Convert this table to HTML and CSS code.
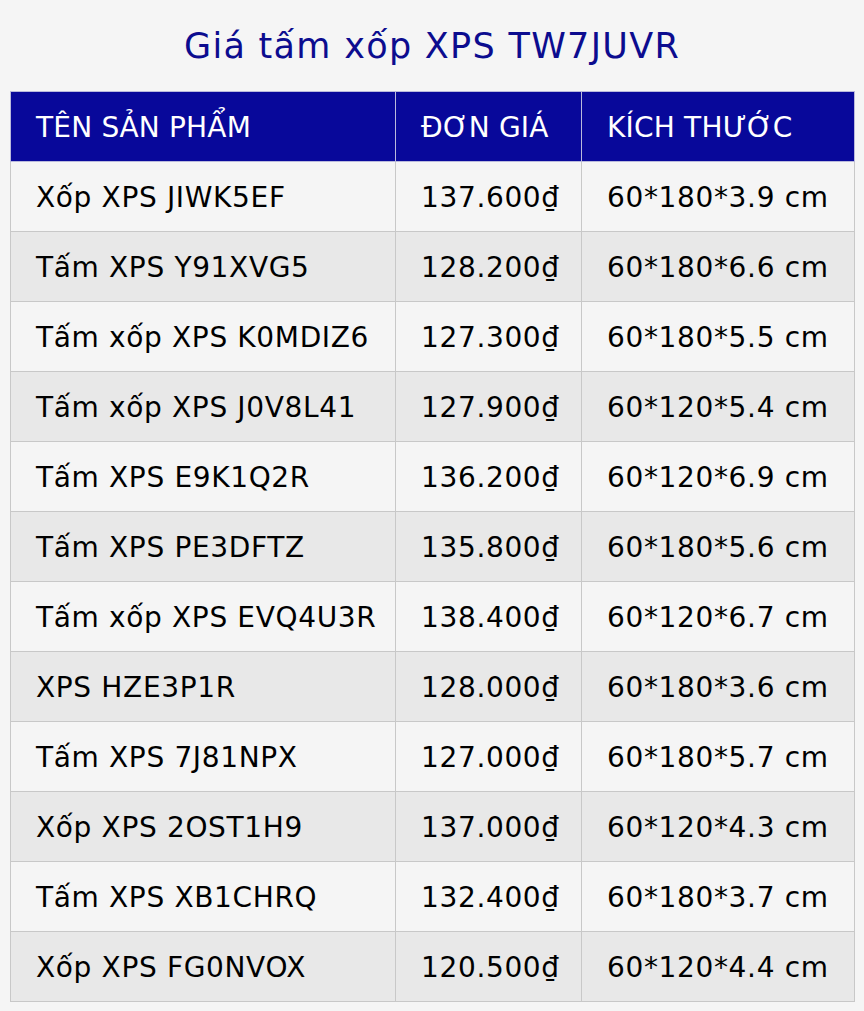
FILE: index.html
```html
<!DOCTYPE html>
<html lang="vi">
<head>
<meta charset="utf-8">
<link rel="stylesheet" href="styles.css">
</head>
<body>
<h1 class="title">Giá tấm xốp XPS TW7JUVR</h1>
<table class="price-table">
  <thead>
    <tr><th class="c-name">TÊN SẢN PHẨM</th><th class="c-price">ĐƠN GIÁ</th><th class="c-size">KÍCH THƯỚC</th></tr>
  </thead>
  <tbody>
    <tr><td>Xốp XPS JIWK5EF</td><td>137.600₫</td><td>60*180*3.9 cm</td></tr>
    <tr><td>Tấm XPS Y91XVG5</td><td>128.200₫</td><td>60*180*6.6 cm</td></tr>
    <tr><td>Tấm xốp XPS K0MDIZ6</td><td>127.300₫</td><td>60*180*5.5 cm</td></tr>
    <tr><td>Tấm xốp XPS J0V8L41</td><td>127.900₫</td><td>60*120*5.4 cm</td></tr>
    <tr><td>Tấm XPS E9K1Q2R</td><td>136.200₫</td><td>60*120*6.9 cm</td></tr>
    <tr><td>Tấm XPS PE3DFTZ</td><td>135.800₫</td><td>60*180*5.6 cm</td></tr>
    <tr><td>Tấm xốp XPS EVQ4U3R</td><td>138.400₫</td><td>60*120*6.7 cm</td></tr>
    <tr><td>XPS HZE3P1R</td><td>128.000₫</td><td>60*180*3.6 cm</td></tr>
    <tr><td>Tấm XPS 7J81NPX</td><td>127.000₫</td><td>60*180*5.7 cm</td></tr>
    <tr><td>Xốp XPS 2OST1H9</td><td>137.000₫</td><td>60*120*4.3 cm</td></tr>
    <tr><td>Tấm XPS XB1CHRQ</td><td>132.400₫</td><td>60*180*3.7 cm</td></tr>
    <tr><td>Xốp XPS FG0NVOX</td><td>120.500₫</td><td>60*120*4.4 cm</td></tr>
  </tbody>
</table>
</body>
</html>
```
FILE: styles.css
```css
html, body {
  margin: 0;
  padding: 0;
  background: #f5f5f5;
}
body {
  font-family: "DejaVu Sans", Verdana, sans-serif;
  padding: 0 10px;
}
.title {
  margin: 0;
  padding-top: 25px;
  height: 65px;
  box-sizing: border-box;
  text-align: center;
  font-weight: normal;
  font-size: 35px;
  letter-spacing: 1.3px;
  line-height: 42px;
  color: #0c0c8f;
}
.price-table {
  width: 844px;
  border-collapse: collapse;
  table-layout: fixed;
  font-size: 28px;
  margin-top: 26px;
}
.price-table th,
.price-table td {
  border: 1px solid #c8c8c8;
  height: 70px;
  box-sizing: border-box;
  padding: 0 0 0 25px;
  text-align: left;
  font-weight: normal;
  white-space: nowrap;
  color: #000;
}
.price-table td {
  letter-spacing: 0.65px;
  padding-top: 2px;
}
.price-table th {
  background: #08089a;
  color: #fff;
  border-color: #b9b9dc;
  letter-spacing: 0.2px;
  padding-top: 2px;
}
.c-name { width: 385px; }
.c-price { width: 186px; }
.c-size { width: 273px; }
.price-table tbody tr:nth-child(odd) td { background: #f5f5f5; }
.price-table tbody tr:nth-child(even) td { background: #e8e8e8; }
```
